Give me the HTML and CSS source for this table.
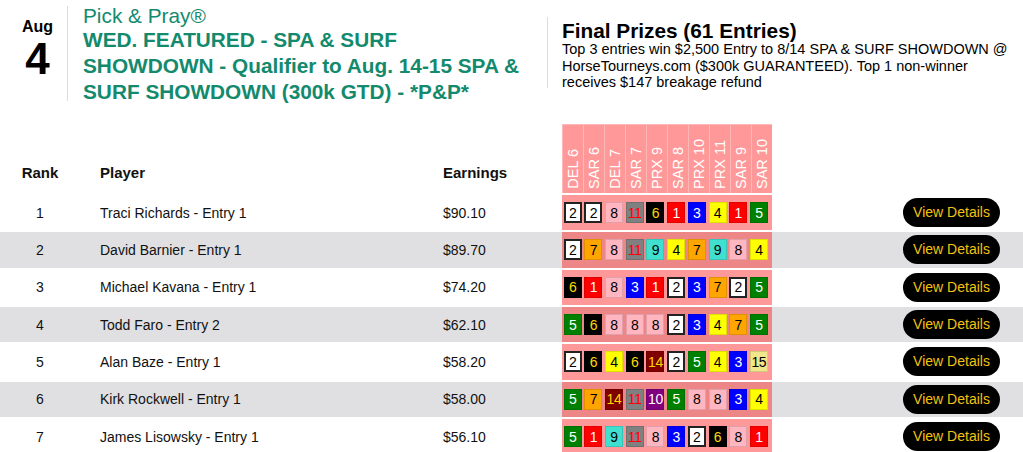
FILE: index.html
```html
<!DOCTYPE html>
<html>
<head>
<meta charset="utf-8">
<link rel="stylesheet" href="styles.css">
</head>
<body>
<div class="top">
  <div class="date">
    <div class="month">Aug</div>
    <div class="day">4</div>
  </div>
  <div class="title">
    <div class="brand">Pick &amp; Pray®</div>
    <div class="name">WED. FEATURED - SPA &amp; SURF SHOWDOWN - Qualifier to Aug. 14-15 SPA &amp; SURF SHOWDOWN (300k GTD) - *P&amp;P*</div>
  </div>
  <div class="prizes">
    <div class="prizes-h">Final Prizes (61 Entries)</div>
    <div class="prizes-t">Top 3 entries win $2,500 Entry to 8/14 SPA &amp; SURF SHOWDOWN @ HorseTourneys.com ($300k GUARANTEED). Top 1 non-winner receives $147 breakage refund</div>
  </div>
</div>

<div class="table">
  <div class="row head">
    <div class="c rank">Rank</div>
    <div class="c player">Player</div>
    <div class="c earn">Earnings</div>
    <div class="picks-h">
      <div class="hcol"><span>DEL 6</span></div>
      <div class="hcol"><span>SAR 6</span></div>
      <div class="hcol"><span>DEL 7</span></div>
      <div class="hcol"><span>SAR 7</span></div>
      <div class="hcol"><span>PRX 9</span></div>
      <div class="hcol"><span>SAR 8</span></div>
      <div class="hcol"><span>PRX 10</span></div>
      <div class="hcol"><span>PRX 11</span></div>
      <div class="hcol"><span>SAR 9</span></div>
      <div class="hcol"><span>SAR 10</span></div>
    </div>
    <div class="c act"></div>
  </div>

  <div class="row">
    <div class="c rank">1</div>
    <div class="c player">Traci Richards - Entry 1</div>
    <div class="c earn">$90.10</div>
    <div class="picks"><span class="b n2">2</span><span class="b n2">2</span><span class="b n8">8</span><span class="b n11">11</span><span class="b n6">6</span><span class="b n1">1</span><span class="b n3">3</span><span class="b n4">4</span><span class="b n1">1</span><span class="b n5">5</span></div>
    <div class="c act"><a class="btn">View Details</a></div>
  </div>
  <div class="row alt">
    <div class="c rank">2</div>
    <div class="c player">David Barnier - Entry 1</div>
    <div class="c earn">$89.70</div>
    <div class="picks"><span class="b n2">2</span><span class="b n7">7</span><span class="b n8">8</span><span class="b n11">11</span><span class="b n9">9</span><span class="b n4">4</span><span class="b n7">7</span><span class="b n9">9</span><span class="b n8">8</span><span class="b n4">4</span></div>
    <div class="c act"><a class="btn">View Details</a></div>
  </div>
  <div class="row">
    <div class="c rank">3</div>
    <div class="c player">Michael Kavana - Entry 1</div>
    <div class="c earn">$74.20</div>
    <div class="picks"><span class="b n6">6</span><span class="b n1">1</span><span class="b n8">8</span><span class="b n3">3</span><span class="b n1">1</span><span class="b n2">2</span><span class="b n3">3</span><span class="b n7">7</span><span class="b n2">2</span><span class="b n5">5</span></div>
    <div class="c act"><a class="btn">View Details</a></div>
  </div>
  <div class="row alt">
    <div class="c rank">4</div>
    <div class="c player">Todd Faro - Entry 2</div>
    <div class="c earn">$62.10</div>
    <div class="picks"><span class="b n5">5</span><span class="b n6">6</span><span class="b n8">8</span><span class="b n8">8</span><span class="b n8">8</span><span class="b n2">2</span><span class="b n3">3</span><span class="b n4">4</span><span class="b n7">7</span><span class="b n5">5</span></div>
    <div class="c act"><a class="btn">View Details</a></div>
  </div>
  <div class="row">
    <div class="c rank">5</div>
    <div class="c player">Alan Baze - Entry 1</div>
    <div class="c earn">$58.20</div>
    <div class="picks"><span class="b n2">2</span><span class="b n6">6</span><span class="b n4">4</span><span class="b n6">6</span><span class="b n14">14</span><span class="b n2">2</span><span class="b n5">5</span><span class="b n4">4</span><span class="b n3">3</span><span class="b n15">15</span></div>
    <div class="c act"><a class="btn">View Details</a></div>
  </div>
  <div class="row alt">
    <div class="c rank">6</div>
    <div class="c player">Kirk Rockwell - Entry 1</div>
    <div class="c earn">$58.00</div>
    <div class="picks"><span class="b n5">5</span><span class="b n7">7</span><span class="b n14">14</span><span class="b n11">11</span><span class="b n10">10</span><span class="b n5">5</span><span class="b n8">8</span><span class="b n8">8</span><span class="b n3">3</span><span class="b n4">4</span></div>
    <div class="c act"><a class="btn">View Details</a></div>
  </div>
  <div class="row">
    <div class="c rank">7</div>
    <div class="c player">James Lisowsky - Entry 1</div>
    <div class="c earn">$56.10</div>
    <div class="picks"><span class="b n5">5</span><span class="b n1">1</span><span class="b n9">9</span><span class="b n11">11</span><span class="b n8">8</span><span class="b n3">3</span><span class="b n2">2</span><span class="b n6">6</span><span class="b n8">8</span><span class="b n1">1</span></div>
    <div class="c act"><a class="btn">View Details</a></div>
  </div>
</div>
</body>
</html>
```

FILE: styles.css
```css
* { box-sizing: border-box; }
html, body { margin: 0; padding: 0; background: #fff; }
body {
  font-family: "Liberation Sans", Arial, Helvetica, sans-serif;
  color: #111;
  width: 1023px;
  height: 452px;
  overflow: hidden;
}

.top {
  display: flex;
  align-items: flex-start;
  padding-top: 5px;
  height: 124px;
}
.date {
  width: 68px;
  height: 95px;
  margin-top: 1px;
  border-right: 1px solid #dcdcdc;
  padding: 12px 0 0 8px;
  text-align: center;
  color: #000;
  font-weight: bold;
}
.month { font-size: 16px; line-height: 18px; }
.day { font-size: 44px; line-height: 44px; margin-top: 1px; }

.title {
  width: 457px;
  padding-left: 15px;
  color: #138a6d;
}
.brand { font-size: 20.8px; line-height: 22px; }
.name { font-size: 20.8px; line-height: 26px; font-weight: bold; }

.prizes {
  margin-left: 22px;
  margin-top: 12px;
  flex: 1;
  height: 71px;
  border-left: 1px solid #dcdcdc;
  padding: 3px 0 0 14px;
  color: #000;
}
.prizes-h { font-size: 20.8px; line-height: 21px; font-weight: bold; }
.prizes-t { font-size: 14.5px; line-height: 16.5px; }

.row {
  display: grid;
  grid-template-columns: 80px 363px 119px 210px 1fr;
  height: 35.33px;
  margin-top: 2px;
  font-size: 14px;
  align-items: center;
}
.row.alt { background: #e0e0e2; }
.row.head {
  height: 69px;
  margin-top: 0;
  align-items: end;
  font-weight: bold;
  font-size: 15px;
}
.head .c { line-height: 18px; padding-bottom: 11px; }
.c { white-space: nowrap; }
.rank { text-align: center; }
.player { padding-left: 20px; }

.picks-h {
  display: flex;
  height: 69px;
  background: #ff9999;
  border-top: 1px solid #ffb8b8;
}
.hcol {
  width: 21px;
  display: flex;
  align-items: flex-end;
  justify-content: center;
  padding-bottom: 4px;
  border-left: 1px solid rgba(255, 255, 255, 0.3);
  color: #fff;
  font-weight: normal;
  font-size: 14.5px;
  line-height: 16px;
}
.hcol:first-child { border-left: 1px solid #ffb8b8; }
.hcol span { writing-mode: vertical-rl; transform: rotate(180deg); }

.picks {
  height: 100%;
  background: rgba(255, 0, 0, 0.4);
  display: flex;
  align-items: center;
  gap: 2.7px;
  padding-left: 1.7px;
}
.b {
  width: 18px;
  height: 21px;
  display: flex;
  align-items: center;
  justify-content: center;
  font-size: 14px;
  line-height: 1;
  border: 1px solid rgba(0, 0, 0, 0.12);
  letter-spacing: -0.3px;
}
.n1 { background: #ff0000; color: #fff; }
.n2 { background: #fff; color: #000; border: 2px solid #222; }
.n3 { background: #0000ff; color: #fff; }
.n4 { background: #ffff00; color: #000; }
.n5 { background: #008000; color: #fff; }
.n6 { background: #000; color: #ffd800; }
.n7 { background: #ffa500; color: #000; }
.n8 { background: #ffb6c1; color: #000; }
.n9 { background: #40e0d0; color: #000; }
.n10 { background: #800080; color: #fff; }
.n11 { background: #808080; color: #ff0000; }
.n14 { background: #800000; color: #ffd800; }
.n15 { background: #f0e68c; color: #000; }

.act {
  display: flex;
  justify-content: flex-end;
  padding-right: 23px;
}
.btn {
  display: inline-block;
  width: 97px;
  height: 29px;
  line-height: 29px;
  border-radius: 15px;
  background: #000;
  color: #f3c20f;
  text-align: center;
  font-size: 14px;
}
```
